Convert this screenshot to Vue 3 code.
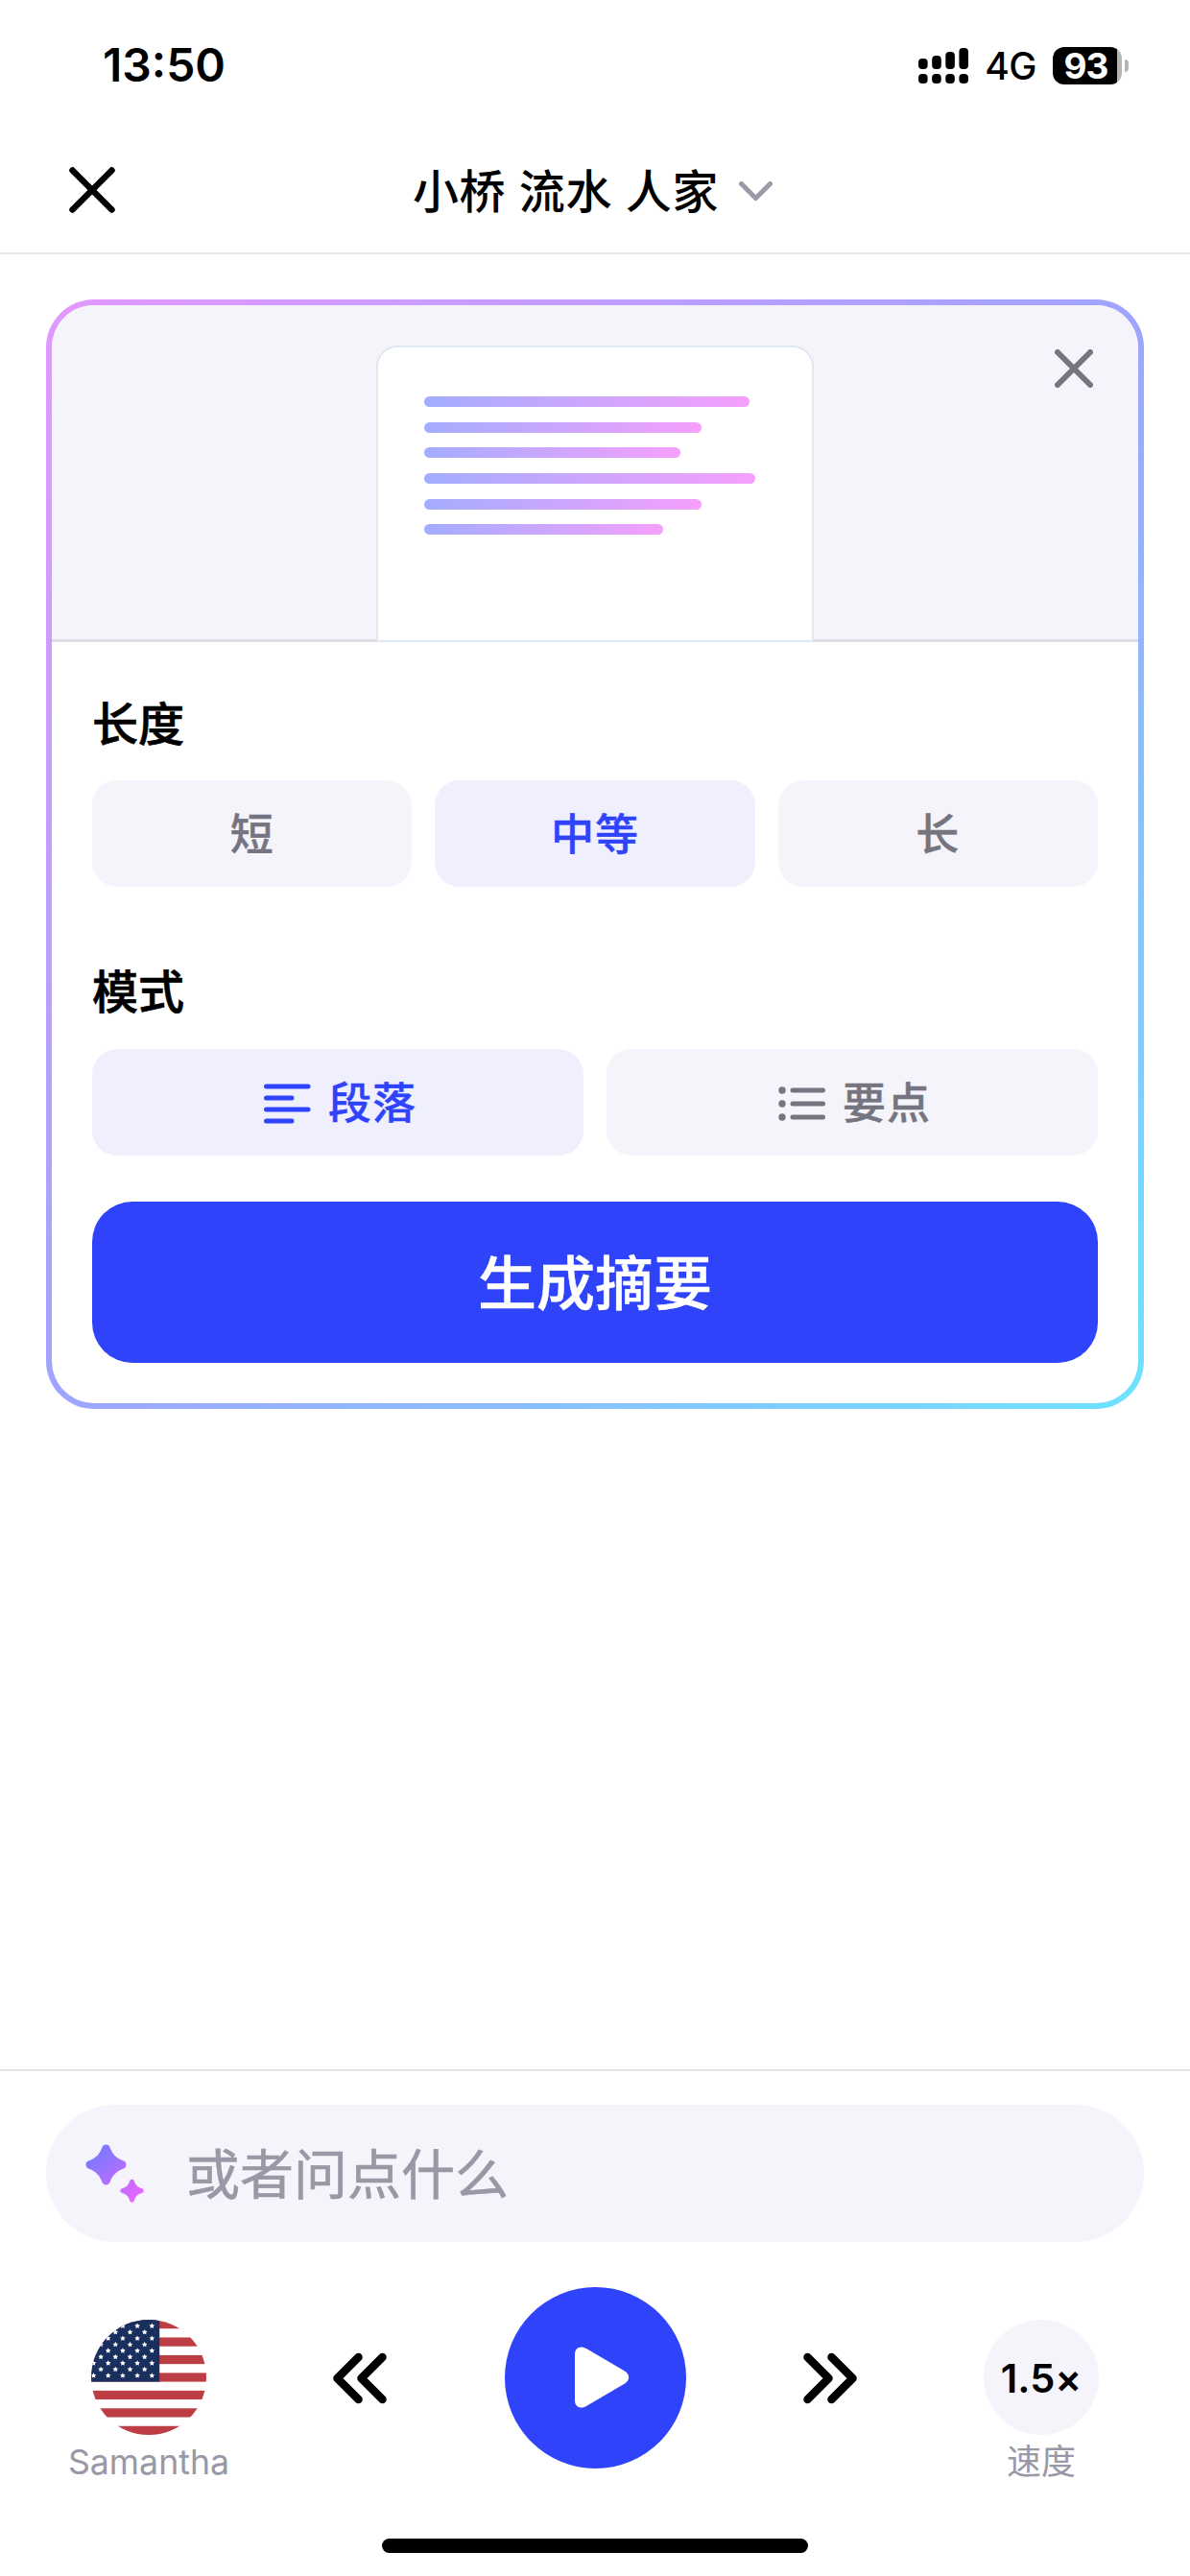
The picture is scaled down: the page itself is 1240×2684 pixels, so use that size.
<template>
  <div class="screen">
    <!-- 状态栏 -->
    <div class="status-bar">
      <span class="status-time">13:50</span>
      <div class="status-right">
        <svg class="signal" viewBox="0 0 52 37">
          <rect x="0" y="11" width="9.6" height="11" rx="4" />
          <rect x="14.2" y="8" width="9.6" height="14" rx="4" />
          <rect x="28.3" y="4" width="9.6" height="18" rx="4" />
          <rect x="42.4" y="0" width="9.6" height="22" rx="4" />
          <rect v-for="i in 4" :key="i" :x="(i - 1) * 14.13" y="27" width="9.6" height="10" rx="4" />
        </svg>
        <span class="network">4G</span>
        <div class="battery">
          <span class="battery-body">93</span>
          <span class="battery-cap"></span>
        </div>
      </div>
    </div>

    <!-- 导航栏 -->
    <header class="nav-bar">
      <svg class="nav-close" viewBox="0 0 48 48">
        <path d="M3.5 3.5L44.5 44.5M44.5 3.5L3.5 44.5" />
      </svg>
      <div class="nav-title">
        <span>小桥 流水 人家</span>
        <svg class="nav-arrow" viewBox="0 0 35 21">
          <path d="M2.5 2.5L17.5 17.5L32.5 2.5" />
        </svg>
      </div>
    </header>

    <main class="content">
      <section class="card">
        <div class="preview">
          <div class="paper">
            <span v-for="(w, i) in lines" :key="i" class="paper-line" :style="{ width: w + 'px' }"></span>
          </div>
          <svg class="card-close" viewBox="0 0 40 40">
            <path d="M3 3L37 37M37 3L3 37" />
          </svg>
        </div>

        <div class="options">
          <h3 class="label">长度</h3>
          <div class="segment">
            <button
              v-for="item in lengths"
              :key="item"
              class="option"
              :class="{ active: item === length }"
              @click="length = item"
            >{{ item }}</button>
          </div>

          <h3 class="label label-mode">模式</h3>
          <div class="segment">
            <button class="option" :class="{ active: mode === 'paragraph' }" @click="mode = 'paragraph'">
              <svg class="option-icon" viewBox="0 0 49 42">
                <path d="M2.5 3H46M2.5 15H29M2.5 27H46M2.5 39H29" />
              </svg>
              <span>段落</span>
            </button>
            <button class="option" :class="{ active: mode === 'points' }" @click="mode = 'points'">
              <svg class="option-icon" viewBox="0 0 49 42">
                <path d="M15 7H46.5M15 21H46.5M15 35H46.5" />
                <circle v-for="y in [7, 21, 35]" :key="y" cx="4" :cy="y" r="3.7" />
              </svg>
              <span>要点</span>
            </button>
          </div>

          <button class="generate">生成摘要</button>
        </div>
      </section>
    </main>

    <!-- 底部：提问框 + 播放控制 -->
    <footer class="footer">
      <div class="ask">
        <svg class="sparkle" viewBox="0 0 62 62">
          <defs>
            <linearGradient id="sparkle-fill" gradientUnits="userSpaceOnUse" x1="10" y1="6" x2="56" y2="54">
              <stop offset="0" stop-color="#777aff" />
              <stop offset="1" stop-color="#e566ff" />
            </linearGradient>
          </defs>
          <path
            fill="url(#sparkle-fill)"
            d="M17.6 3C18.9 -.3 24.1 -.3 25.4 3C28 10.5 32.5 15 40 17.600C43.300 18.900 43.300 24.100 40 25.400C32.500 28 28 32.500 25.400 40C24.100 43.300 18.900 43.300 17.600 40C15 32.500 10.500 28 3 25.400C-.3 24.100 -.3 18.900 3 17.600C10.500 15 15 10.500 17.600 3Z"
          />
          <path
            fill="url(#sparkle-fill)"
            d="M46.200 38.200C46.900 36.200 50.100 36.200 50.800 38.200C52.400 43 54 44.600 59 46.200C61.200 46.900 61.200 50.100 59 50.800C54 52.400 52.400 54 50.800 59C50.100 61 46.900 61 46.200 59C44.600 54 43 52.400 38 50.800C35.800 50.100 35.800 46.900 38 46.200C43 44.600 44.600 43 46.200 38.200Z"
          />
        </svg>
        <span class="ask-text">或者问点什么</span>
      </div>

      <div class="player">
        <div class="side">
          <svg class="flag" viewBox="0 0 120 120">
            <defs>
              <clipPath id="flag-clip"><circle cx="60" cy="60" r="60" /></clipPath>
            </defs>
            <g clip-path="url(#flag-clip)">
              <rect width="120" height="120" fill="#fff" />
              <rect v-for="i in 7" :key="i" :y="(i - 1) * 18.46" width="120" height="9.23" fill="#bd3d44" />
              <rect width="71.2" height="64.6" fill="#192f5d" />
              <path v-for="(s, i) in stars" :key="i" :transform="`translate(${s.x} ${s.y})`" :d="starPath" fill="#fff" />
            </g>
          </svg>
          <span class="side-label voice">Samantha</span>
        </div>
        <svg class="skip" viewBox="0 0 56 54">
          <path d="M26.5 5L4.5 27L26.5 49M51.5 5L29.5 27L51.5 49" />
        </svg>
        <button class="play">
          <svg viewBox="0 0 58 64">
            <path d="M1 8C1 1 7 -1.5 13 2L53 25.5C58.5 29 58.5 35 53 38.5L13 62C7 65.5 1 63 1 56Z" />
          </svg>
        </button>
        <svg class="skip" viewBox="0 0 56 54">
          <path d="M4.5 5L26.5 27L4.5 49M29.5 5L51.5 27L29.5 49" />
        </svg>
        <div class="side">
          <div class="speed">1.5×</div>
          <span class="side-label">速度</span>
        </div>
      </div>

      <div class="home-bar"></div>
    </footer>
  </div>
</template>

<script setup>
import { ref } from 'vue';

const lengths = ['短', '中等', '长'];
const length = ref('中等');
const mode = ref('paragraph');

// 预览纸张上每行的宽度
const lines = [339, 289, 267, 345, 289, 249];

// 国旗星星：9 行交错排列
const stars = [];
for (let row = 0; row < 9; row++) {
  const start = row % 2 ? 55.7 : 63.3;
  for (let x = start; x > 0; x -= 15.2) {
    stars.push({ x: x.toFixed(1), y: (6.46 * (row + 1)).toFixed(2) });
  }
}

const starPath = Array.from({ length: 10 }, (_, i) => {
  const r = i % 2 ? 1.5 : 3;
  const a = (Math.PI / 5) * i - Math.PI / 2;
  return `${i ? 'L' : 'M'}${(r * Math.cos(a)).toFixed(2)} ${(r * Math.sin(a)).toFixed(2)}`;
}).join('') + 'Z';
</script>

<style>
body {
  margin: 0;
  background: #fff;
}
</style>

<style scoped>
.screen {
  width: 1240px;
  height: 2684px;
  display: flex;
  flex-direction: column;
  background: #fff;
  color: #000;
  font-family: Inter, "Noto Sans CJK SC", sans-serif;
  overflow: hidden;
}
button {
  border: none;
  padding: 0;
  font-family: inherit;
}
svg {
  display: block;
  flex-shrink: 0;
}

/* 状态栏 */
.status-bar {
  box-sizing: border-box;
  height: 136px;
  display: flex;
  justify-content: space-between;
  align-items: center;
  padding: 0 64px 0 107px;
}
.status-time {
  font-size: 48px;
  font-weight: 600;
  line-height: 60px;
}
.status-right {
  display: flex;
  align-items: center;
}
.signal {
  width: 52px;
  height: 37px;
}
.network {
  margin-left: 17px;
  padding-top: 2px;
  font-size: 39px;
  font-weight: 500;
  line-height: 40px;
  letter-spacing: -0.5px;
}
.battery {
  display: flex;
  align-items: center;
  gap: 3px;
  margin-left: 17px;
}
.battery-body {
  box-sizing: border-box;
  width: 72px;
  height: 39px;
  padding-right: 3px;
  border-radius: 12px;
  background: linear-gradient(90deg, #000 67px, #b5b5b5 67px);
  color: #fff;
  font-size: 37px;
  font-weight: 700;
  line-height: 39px;
  text-align: center;
  letter-spacing: -1px;
}
.battery-cap {
  width: 4px;
  height: 13px;
  border-radius: 0 4px 4px 0;
  background: #b5b5b5;
}

/* 导航栏 */
.nav-bar {
  box-sizing: border-box;
  height: 129px;
  display: grid;
  grid-template-columns: 200px 1fr 200px;
  align-items: center;
  border-bottom: 2px solid #e4e4e9;
}
.nav-close {
  width: 48px;
  height: 48px;
  margin-left: 72px;
  margin-bottom: 3px;
}
.nav-close path {
  stroke: #000;
  stroke-width: 6.5;
  stroke-linecap: round;
}
.nav-title {
  display: flex;
  justify-content: center;
  align-items: center;
  gap: 21px;
  padding-right: 5px;
  font-size: 48px;
  font-weight: 500;
  line-height: 60px;
  letter-spacing: 0.7px;
}
.nav-arrow {
  width: 35px;
  height: 21px;
}
.nav-arrow path {
  fill: none;
  stroke: #9a9aa8;
  stroke-width: 5;
  stroke-linecap: round;
  stroke-linejoin: round;
}

/* 摘要卡片 */
.content {
  flex: 1;
  padding: 47px 48px 0;
}
.card {
  box-sizing: border-box;
  height: 1156px;
  border: 6px solid transparent;
  border-radius: 50px;
  background:
    linear-gradient(#fff, #fff) padding-box,
    linear-gradient(135deg, #e398ff, #9fa4ff 50%, #6ee2ff) border-box;
}
.preview {
  position: relative;
  box-sizing: border-box;
  height: 351px;
  display: flex;
  justify-content: center;
  align-items: flex-end;
  border-radius: 44px 44px 0 0;
  background: linear-gradient(#dddce4, #dddce4) bottom / 100% 3px no-repeat, #f5f4fb;
}
.paper {
  box-sizing: border-box;
  width: 456px;
  height: 309px;
  display: flex;
  flex-direction: column;
  gap: 15.7px;
  padding: 51px 48px 0;
  border: 2px solid #e0e8f0;
  border-radius: 22px 22px 0 0;
  background: #fff;
}
.paper-line {
  height: 11px;
  border-radius: 6px;
  background: linear-gradient(100deg, #a3adff, #f5a0fc);
}
.card-close {
  position: absolute;
  top: 46px;
  right: 47px;
  width: 40px;
  height: 40px;
}
.card-close path {
  stroke: #757581;
  stroke-width: 6;
  stroke-linecap: round;
}
.options {
  padding: 54px 42px 0;
}
.label {
  margin: 0 0 26px;
  font-size: 48px;
  font-weight: 500;
  line-height: 64px;
  -webkit-text-stroke: 0.7px currentColor;
}
.label-mode {
  margin-top: 78px;
  margin-bottom: 27px;
}
.segment {
  display: flex;
  gap: 24px;
}
.option {
  flex: 1;
  height: 111px;
  display: flex;
  justify-content: center;
  align-items: center;
  gap: 18px;
  padding-top: 2px;
  border-radius: 26px;
  background: #f5f4fb;
  color: #757581;
  font-size: 45px;
  font-weight: 500;
  line-height: 60px;
  letter-spacing: 1px;
  -webkit-text-stroke: 0.4px currentColor;
}
.option.active {
  background: #f0effe;
  color: #2f43fb;
}
.option-icon {
  width: 49px;
  height: 42px;
  margin-left: 5px;
}
.option-icon path {
  stroke: currentColor;
  stroke-width: 5;
  stroke-linecap: round;
}
.option-icon circle {
  fill: currentColor;
}
.generate {
  width: 100%;
  height: 168px;
  margin-top: 48px;
  padding-top: 4px;
  border-radius: 42px;
  background: #2f43fb;
  color: #fff;
  font-size: 61px;
  font-weight: 500;
  line-height: 80px;
  -webkit-text-stroke: 0.5px currentColor;
}

/* 底部 */
.footer {
  box-sizing: border-box;
  height: 528px;
  padding: 35px 48px 0;
  border-top: 2px solid #e3e3e6;
}
.ask {
  height: 143px;
  display: flex;
  align-items: center;
  border-radius: 72px;
  background: #f5f4fb;
}
.sparkle {
  width: 62px;
  height: 62px;
  margin-left: 41px;
}
.ask-text {
  margin-left: 43px;
  padding-top: 2px;
  color: #9898a6;
  font-size: 56px;
  line-height: 80px;
  -webkit-text-stroke: 0.6px currentColor;
}
.player {
  display: flex;
  justify-content: space-between;
  align-items: flex-start;
  margin-top: 47px;
  padding: 0 22px;
}
.side {
  width: 170px;
  display: flex;
  flex-direction: column;
  align-items: center;
  padding-top: 34px;
}
.flag,
.speed {
  width: 120px;
  height: 120px;
}
.speed {
  box-sizing: border-box;
  padding-top: 1px;
  border-radius: 50%;
  background: #f5f4fb;
  font-size: 41.5px;
  font-weight: 600;
  font-feature-settings: "calt" 0;
  line-height: 120px;
  text-align: center;
}
.side-label {
  margin-top: 4px;
  color: #9898a6;
  font-size: 36px;
  line-height: 48px;
}
.voice {
  font-size: 35.7px;
}
.skip {
  width: 56px;
  height: 54px;
  margin: 68px 16px 0 0;
}
.skip path {
  fill: none;
  stroke: #000;
  stroke-width: 8.5;
  stroke-linecap: round;
  stroke-linejoin: round;
}
.play + .skip {
  margin: 68px 0 0 16px;
}
.play {
  width: 189px;
  height: 189px;
  display: flex;
  justify-content: center;
  align-items: center;
  border-radius: 50%;
  background: #2f43fb;
}
.play svg {
  width: 58px;
  height: 64px;
  margin-left: 13px;
  margin-bottom: 2px;
}
.play path {
  fill: #fff;
}
.home-bar {
  width: 444px;
  height: 15px;
  margin: 56px auto 0;
  border-radius: 8px;
  background: #000;
}
</style>
